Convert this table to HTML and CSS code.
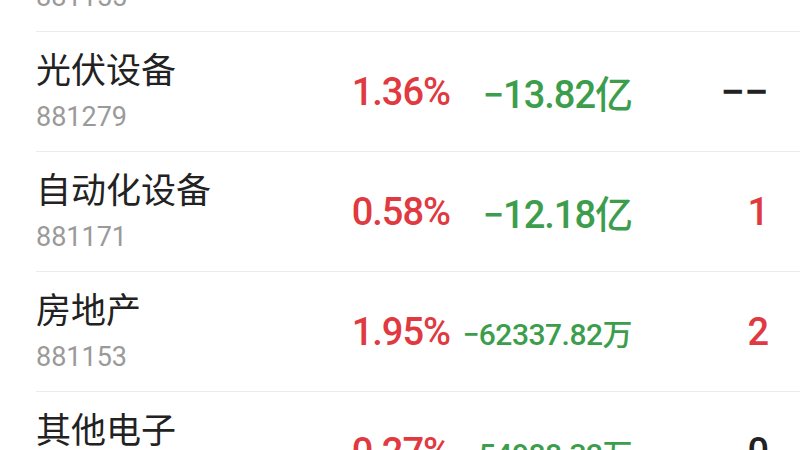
FILE: index.html
```html
<!DOCTYPE html>
<html lang="zh-CN">
<head>
    <meta charset="UTF-8">
    <meta name="viewport" content="width=device-width, initial-scale=1.0">
    <title>板块列表</title>
    <link rel="stylesheet" href="styles.css">
</head>
<body>
    <div class="lista">
        <!-- linha cortada no topo (scroll) -->
        <div class="linha">
            <div class="nome">
                <span class="titulo">银行</span>
                <span class="codigo">881155</span>
            </div>
            <span class="pct up">0.12%</span>
            <span class="valor down">−8.40亿</span>
            <span class="rank">−−</span>
        </div>

        <div class="linha">
            <div class="nome">
                <span class="titulo">光伏设备</span>
                <span class="codigo">881279</span>
            </div>
            <span class="pct up">1.36%</span>
            <span class="valor down">−13.82亿</span>
            <span class="rank traco">−−</span>
        </div>

        <div class="linha">
            <div class="nome">
                <span class="titulo">自动化设备</span>
                <span class="codigo">881171</span>
            </div>
            <span class="pct up">0.58%</span>
            <span class="valor down">−12.18亿</span>
            <span class="rank up">1</span>
        </div>

        <div class="linha">
            <div class="nome">
                <span class="titulo">房地产</span>
                <span class="codigo">881153</span>
            </div>
            <span class="pct up">1.95%</span>
            <span class="valor down small">−62337.82万</span>
            <span class="rank up">2</span>
        </div>

        <div class="linha">
            <div class="nome">
                <span class="titulo">其他电子</span>
                <span class="codigo">881124</span>
            </div>
            <span class="pct up">0.27%</span>
            <span class="valor down small">−54988.32万</span>
            <span class="rank">0</span>
        </div>
    </div>
</body>
</html>
```

FILE: styles.css
```css
body {
    margin: 0;
    padding: 0;
    background: #fff;
    font-family: "Noto Sans CJK SC", "Noto Sans", sans-serif;
    color: #222;
    overflow: hidden;
}

/* lista rolada: a primeira linha fica cortada */
.lista {
    margin-top: -88px;
}

.linha {
    display: grid;
    grid-template-columns: 1fr 120px 182px 136px;
    align-items: center;
    height: 119px;
    margin-left: 36px;
    padding-right: 32px;
    border-bottom: 1px solid #ececec;
}

.nome {
    display: flex;
    flex-direction: column;
    padding-bottom: 4px;
}

.titulo {
    font-size: 35px;
    line-height: 44px;
    color: #222;
}

.codigo {
    font-family: "Roboto", "Noto Sans", sans-serif;
    font-size: 27px;
    line-height: 34px;
    margin-top: 10px;
    color: #9a9a9a;
}

.pct, .valor, .rank {
    font-family: "Roboto", "Noto Sans CJK SC", sans-serif;
    font-size: 38px;
    font-weight: 500;
    text-align: right;
    letter-spacing: -1px;
    white-space: nowrap;
}

.valor.small {
    font-size: 30px;
    letter-spacing: -0.5px;
}

.rank {
    color: #222;
}

.traco {
    font-size: 44px;
    letter-spacing: -1px;
}

.up {
    color: #e0393f;
}

.down {
    color: #3c9e4c;
}
```
